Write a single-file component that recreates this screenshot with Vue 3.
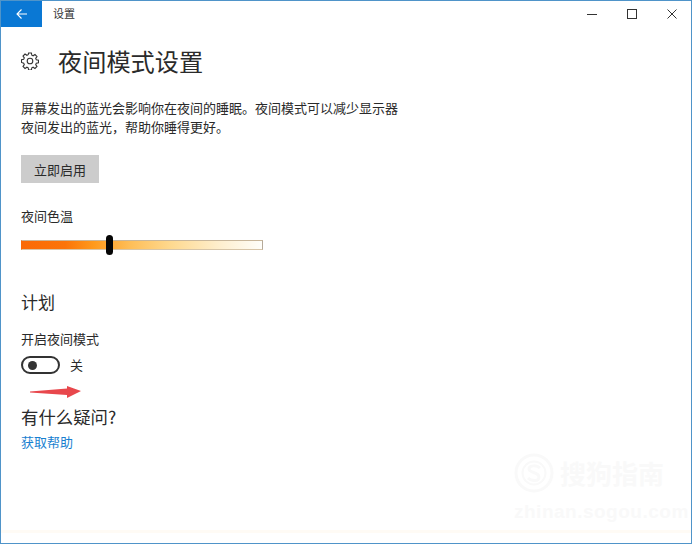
<script setup>
const stops = 'linear-gradient(90deg,#fa6a06 0%,#fc7408 18%,#ff9a1c 30%,#ffbe58 45%,#ffd98f 62%,#ffeecd 82%,#fffefa 100%)'
</script>

<template>
  <div class="win">
    <header class="titlebar">
      <div class="back">
        <svg width="12" height="12" viewBox="0 0 12 12" fill="none" stroke="#fff" stroke-width="1.1"><path d="M11 6H1M5.5 1.5 1 6l4.5 4.5"/></svg>
      </div>
      <span class="apptitle">设置</span>
      <div class="controls">
        <svg width="10" height="10" viewBox="0 0 10 10" stroke="#333" fill="none"><path d="M0 5.5h10"/></svg>
        <svg width="10" height="10" viewBox="0 0 10 10" stroke="#333" fill="none"><rect x=".5" y=".5" width="9" height="9"/></svg>
        <svg width="10" height="10" viewBox="0 0 10 10" stroke="#333" fill="none"><path d="M.5.5l9 9M9.5.5l-9 9"/></svg>
      </div>
    </header>

    <main class="content">
      <div class="heading">
        <svg class="gear" width="18" height="18" viewBox="0 0 18 18" fill="none" stroke="#333" stroke-width="1.1">
          <circle cx="9" cy="9" r="2.8"/>
          <path d="M7.6 1h2.8l.4 2.2 1.3.6 1.9-1.3 2 2-1.3 1.9.6 1.3 2.2.4v2.8l-2.2.4-.6 1.3 1.3 1.9-2 2-1.9-1.3-1.3.6-.4 2.2H7.6l-.4-2.2-1.3-.6-1.9 1.3-2-2 1.3-1.9-.6-1.3L.5 10.4V7.6l2.2-.4.6-1.3L2 4l2-2 1.9 1.3 1.3-.6z"/>
        </svg>
        <h1>夜间模式设置</h1>
      </div>

      <p class="desc">屏幕发出的蓝光会影响你在夜间的睡眠。夜间模式可以减少显示器<br>夜间发出的蓝光，帮助你睡得更好。</p>

      <button class="btn">立即启用</button>

      <div class="label temp">夜间色温</div>
      <div class="slider">
        <div class="track" :style="{ background: stops }"></div>
        <div class="thumb"></div>
      </div>

      <h2 class="plan">计划</h2>
      <div class="label">开启夜间模式</div>
      <div class="toggle-row">
        <div class="toggle"><span class="knob"></span></div>
        <span class="off">关</span>
      </div>

      <h2 class="help">有什么疑问?</h2>
      <a class="link">获取帮助</a>
    </main>

    <svg class="arrow" width="52" height="16" viewBox="0 0 52 16"><path d="M0 7.5 37 4.5 37 2 51 7 37 14 37 11 0 8.5z" fill="#e8474c"/></svg>

    <div class="watermark">
      <div class="wm-top">
        <svg width="40" height="40" viewBox="0 0 40 40" fill="none" stroke="#f9f9f9" stroke-width="3"><circle cx="20" cy="20" r="18"/><circle cx="20" cy="20" r="11.5" stroke-width="2"/><path d="M26 15c-3-3-11-3-11 1s10 3 10 8-8 4-11 1"/></svg>
        <span class="wm-cn">搜狗指南</span>
      </div>
      <div class="wm-en">zhinan.sogou.com</div>
    </div>
    <div class="cream"></div>
  </div>
</template>

<style scoped>
.win {
  position: relative;
  box-sizing: border-box;
  width: 692px;
  height: 544px;
  overflow: hidden;
  background: #fff;
  border: 1px solid #4f94c9;
  font-family: "Noto Sans CJK SC", "Noto Sans", sans-serif;
  color: #2a2a2a;
}
.titlebar {
  display: flex;
  align-items: center;
  height: 26px;
}
.back {
  display: flex;
  align-items: center;
  justify-content: center;
  width: 41px;
  height: 26px;
  margin-right: 11px;
  background: #0a78d4;
}
.apptitle {
  position: relative;
  top: -1px;
  font-size: 11px;
  color: #333;
}
.controls {
  display: flex;
  align-items: center;
  gap: 30px;
  margin-left: auto;
  margin-right: 14px;
}
.content {
  padding-left: 20px;
}
.heading {
  display: flex;
  align-items: center;
  gap: 19px;
  height: 32px;
  margin-top: 18px;
}
.gear {
  flex: none;
}
h1 {
  margin: 0;
  font-size: 24.2px;
  font-weight: 400;
  line-height: 32px;
  color: #2a2a2a;
}
.desc {
  margin: 21px 0 0;
  font-size: 13px;
  line-height: 19px;
}
.btn {
  display: block;
  width: 78px;
  height: 28px;
  margin-top: 19px;
  padding: 0;
  border: 0;
  background: #cccccc;
  font: inherit;
  font-size: 13px;
  color: #2a2a2a;
}
.label {
  font-size: 13px;
  line-height: 18px;
}
.temp {
  margin-top: 24px;
}
.slider {
  position: relative;
  width: 242px;
  height: 24px;
  margin-top: 8px;
  display: flex;
  align-items: center;
}
.track {
  box-sizing: border-box;
  width: 100%;
  height: 10px;
  border: 1px solid #b5aa9a;
  border-left-color: #fa6a06;
  border-top-color: #c9b69a;
  border-bottom-color: #d8c5a8;
}
.thumb {
  position: absolute;
  left: 85px;
  top: 2px;
  width: 7px;
  height: 20px;
  border-radius: 4px;
  background: #050505;
}
h2 {
  margin: 0;
  font-weight: 400;
  color: #2a2a2a;
}
.plan {
  margin-top: 33px;
  font-size: 17px;
  line-height: 24px;
}
.plan + .label {
  margin-top: 16px;
}
.toggle-row {
  display: flex;
  align-items: center;
  gap: 10px;
  margin-top: 8px;
}
.toggle {
  box-sizing: border-box;
  display: flex;
  align-items: center;
  width: 39px;
  height: 18px;
  padding-left: 5px;
  border: 2px solid #333;
  border-radius: 9px;
}
.knob {
  width: 9px;
  height: 9px;
  border-radius: 50%;
  background: #333;
}
.off {
  font-size: 13px;
  line-height: 18px;
}
.help {
  margin-top: 31px;
  font-size: 17.4px;
  line-height: 24px;
}
.link {
  display: block;
  margin-top: 4px;
  font-size: 13px;
  line-height: 18px;
  color: #1a7fd0;
}
.arrow {
  position: absolute;
  left: 29px;
  top: 383px;
}
.watermark {
  position: absolute;
  left: 513px;
  top: 452px;
  color: #f9f9f9;
}
.wm-top {
  display: flex;
  align-items: center;
  gap: 6px;
}
.wm-cn {
  font-size: 26px;
  line-height: 40px;
  font-weight: 700;
}
.wm-en {
  margin-top: 9px;
  font-family: "Liberation Sans", sans-serif;
  font-size: 19px;
  line-height: 20px;
  font-weight: 700;
  letter-spacing: .5px;
}
.cream {
  position: absolute;
  left: 0;
  right: 0;
  bottom: 10px;
  height: 3px;
  background: #fffbf5;
}
</style>
